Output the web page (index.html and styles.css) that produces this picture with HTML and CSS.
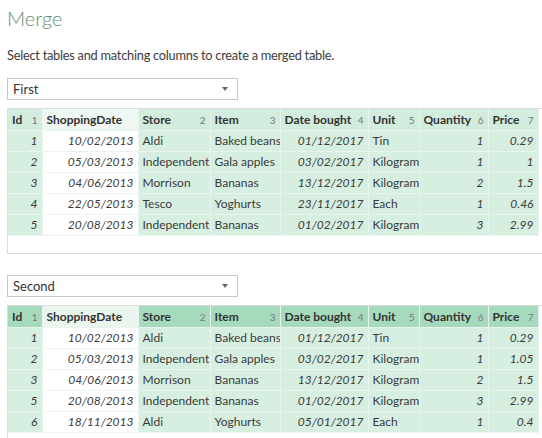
FILE: index.html
```html
<!DOCTYPE html>
<html>
<head>
<meta charset="utf-8">
<link rel="stylesheet" href="styles.css">
</head>
<body>
<div class="page">
  <h1 class="title">Merge</h1>
  <p class="intro">Select tables and matching columns to create a merged table.</p>

  <div class="select"><span>First</span><span class="caret"></span></div>
  <div class="panel">
    <table class="grid">
      <colgroup>
        <col class="c-id"><col class="c-sd"><col class="c-store"><col class="c-item"><col class="c-db"><col class="c-unit"><col class="c-qty"><col class="c-price">
      </colgroup>
      <thead>
        <tr>
          <th><div class="h"><span>Id</span><i>1</i></div></th>
          <th class="sel"><div class="h"><span>ShoppingDate</span></div></th>
          <th><div class="h"><span>Store</span><i>2</i></div></th>
          <th><div class="h"><span>Item</span><i>3</i></div></th>
          <th><div class="h"><span>Date bought</span><i>4</i></div></th>
          <th><div class="h"><span>Unit</span><i>5</i></div></th>
          <th><div class="h"><span>Quantity</span><i>6</i></div></th>
          <th><div class="h"><span>Price</span><i>7</i></div></th>
        </tr>
      </thead>
      <tbody>
        <tr><td class="n">1</td><td class="n sel">10/02/2013</td><td>Aldi</td><td>Baked beans</td><td class="n">01/12/2017</td><td>Tin</td><td class="n">1</td><td class="n">0.29</td></tr>
        <tr><td class="n">2</td><td class="n sel">05/03/2013</td><td>Independent</td><td>Gala apples</td><td class="n">03/02/2017</td><td>Kilogram</td><td class="n">1</td><td class="n">1</td></tr>
        <tr><td class="n">3</td><td class="n sel">04/06/2013</td><td>Morrison</td><td>Bananas</td><td class="n">13/12/2017</td><td>Kilogram</td><td class="n">2</td><td class="n">1.5</td></tr>
        <tr><td class="n">4</td><td class="n sel">22/05/2013</td><td>Tesco</td><td>Yoghurts</td><td class="n">23/11/2017</td><td>Each</td><td class="n">1</td><td class="n">0.46</td></tr>
        <tr><td class="n">5</td><td class="n sel">20/08/2013</td><td>Independent</td><td>Bananas</td><td class="n">01/02/2017</td><td>Kilogram</td><td class="n">3</td><td class="n">2.99</td></tr>
      </tbody>
    </table>
  </div>

  <div class="select second"><span>Second</span><span class="caret"></span></div>
  <div class="panel">
    <table class="grid dark">
      <colgroup>
        <col class="c-id"><col class="c-sd"><col class="c-store"><col class="c-item"><col class="c-db"><col class="c-unit"><col class="c-qty"><col class="c-price">
      </colgroup>
      <thead>
        <tr>
          <th><div class="h"><span>Id</span><i>1</i></div></th>
          <th class="sel"><div class="h"><span>ShoppingDate</span></div></th>
          <th><div class="h"><span>Store</span><i>2</i></div></th>
          <th><div class="h"><span>Item</span><i>3</i></div></th>
          <th><div class="h"><span>Date bought</span><i>4</i></div></th>
          <th><div class="h"><span>Unit</span><i>5</i></div></th>
          <th><div class="h"><span>Quantity</span><i>6</i></div></th>
          <th><div class="h"><span>Price</span><i>7</i></div></th>
        </tr>
      </thead>
      <tbody>
        <tr><td class="n">1</td><td class="n sel">10/02/2013</td><td>Aldi</td><td>Baked beans</td><td class="n">01/12/2017</td><td>Tin</td><td class="n">1</td><td class="n">0.29</td></tr>
        <tr><td class="n">2</td><td class="n sel">05/03/2013</td><td>Independent</td><td>Gala apples</td><td class="n">03/02/2017</td><td>Kilogram</td><td class="n">1</td><td class="n">1.05</td></tr>
        <tr><td class="n">3</td><td class="n sel">04/06/2013</td><td>Morrison</td><td>Bananas</td><td class="n">13/12/2017</td><td>Kilogram</td><td class="n">2</td><td class="n">1.5</td></tr>
        <tr><td class="n">5</td><td class="n sel">20/08/2013</td><td>Independent</td><td>Bananas</td><td class="n">01/02/2017</td><td>Kilogram</td><td class="n">3</td><td class="n">2.99</td></tr>
        <tr><td class="n">6</td><td class="n sel">18/11/2013</td><td>Aldi</td><td>Yoghurts</td><td class="n">05/01/2017</td><td>Each</td><td class="n">1</td><td class="n">0.4</td></tr>
      </tbody>
    </table>
  </div>
</div>
</body>
</html>
```

FILE: styles.css
```css
html, body {
  margin: 0;
  padding: 0;
  background: #ffffff;
}
body {
  width: 542px;
  height: 438px;
  overflow: hidden;
  font-family: Lato, "Open Sans", sans-serif;
  color: #333333;
}
.page {
  padding-left: 7px;
}
.title {
  margin: 0;
  padding-top: 6px;
  font-size: 20px;
  line-height: 25px;
  font-weight: 300;
  color: #5b8d71;
}
.intro {
  margin: 14px 0 0;
  font-size: 12.8px;
  letter-spacing: -0.25px;
  line-height: 20px;
  color: #3c3c3c;
}
.select {
  margin-top: 13px;
  width: 215px;
  height: 20px;
  border: 1px solid #c8c8c8;
  display: flex;
  align-items: center;
  justify-content: space-between;
  padding: 0 9px 0 5px;
  font-size: 13px;
  color: #333;
}
.select.second {
  margin-top: 21px;
}
.caret {
  width: 0;
  height: 0;
  border-left: 3px solid transparent;
  border-right: 3px solid transparent;
  border-top: 4px solid #666;
}
.panel {
  margin-top: 8px;
  width: 560px;
  height: 144px;
  border: 1px solid #dcdcdc;
  border-right: none;
}
.grid {
  border-collapse: collapse;
  table-layout: fixed;
  width: 530px;
  font-size: 12px;
}
.c-id { width: 34px; }
.c-sd { width: 96px; }
.c-store { width: 72px; }
.c-item { width: 70px; }
.c-db { width: 88px; }
.c-unit { width: 51px; }
.c-qty { width: 69px; }
.c-price { width: 50px; }
.grid th, .grid td {
  height: 21px;
  padding: 0 4px;
  border: 1px solid #e8f4ed;
  background: #d6efe1;
  white-space: nowrap;
  overflow: hidden;
  box-sizing: border-box;
}
.grid tr:first-child th { border-top: none; }
.grid th:first-child, .grid td:first-child { border-left: none; }
.grid th {
  text-align: left;
  font-weight: 700;
  color: #333;
  background: #d2ecdd;
}
.grid.dark th {
  background: #a6dabd;
}
.grid th.sel {
  background: #eef7f2;
}
.grid.dark th.sel {
  background: #eaf5ee;
}
.grid td.sel {
  background: #ffffff;
}
.h {
  display: flex;
  justify-content: space-between;
  align-items: baseline;
}
.h i {
  font-style: normal;
  font-weight: 400;
  font-size: 10px;
  color: #777;
}
.grid td {
  color: #3a3a3a;
}
.grid td.n {
  text-align: right;
  font-style: italic;
}
```
